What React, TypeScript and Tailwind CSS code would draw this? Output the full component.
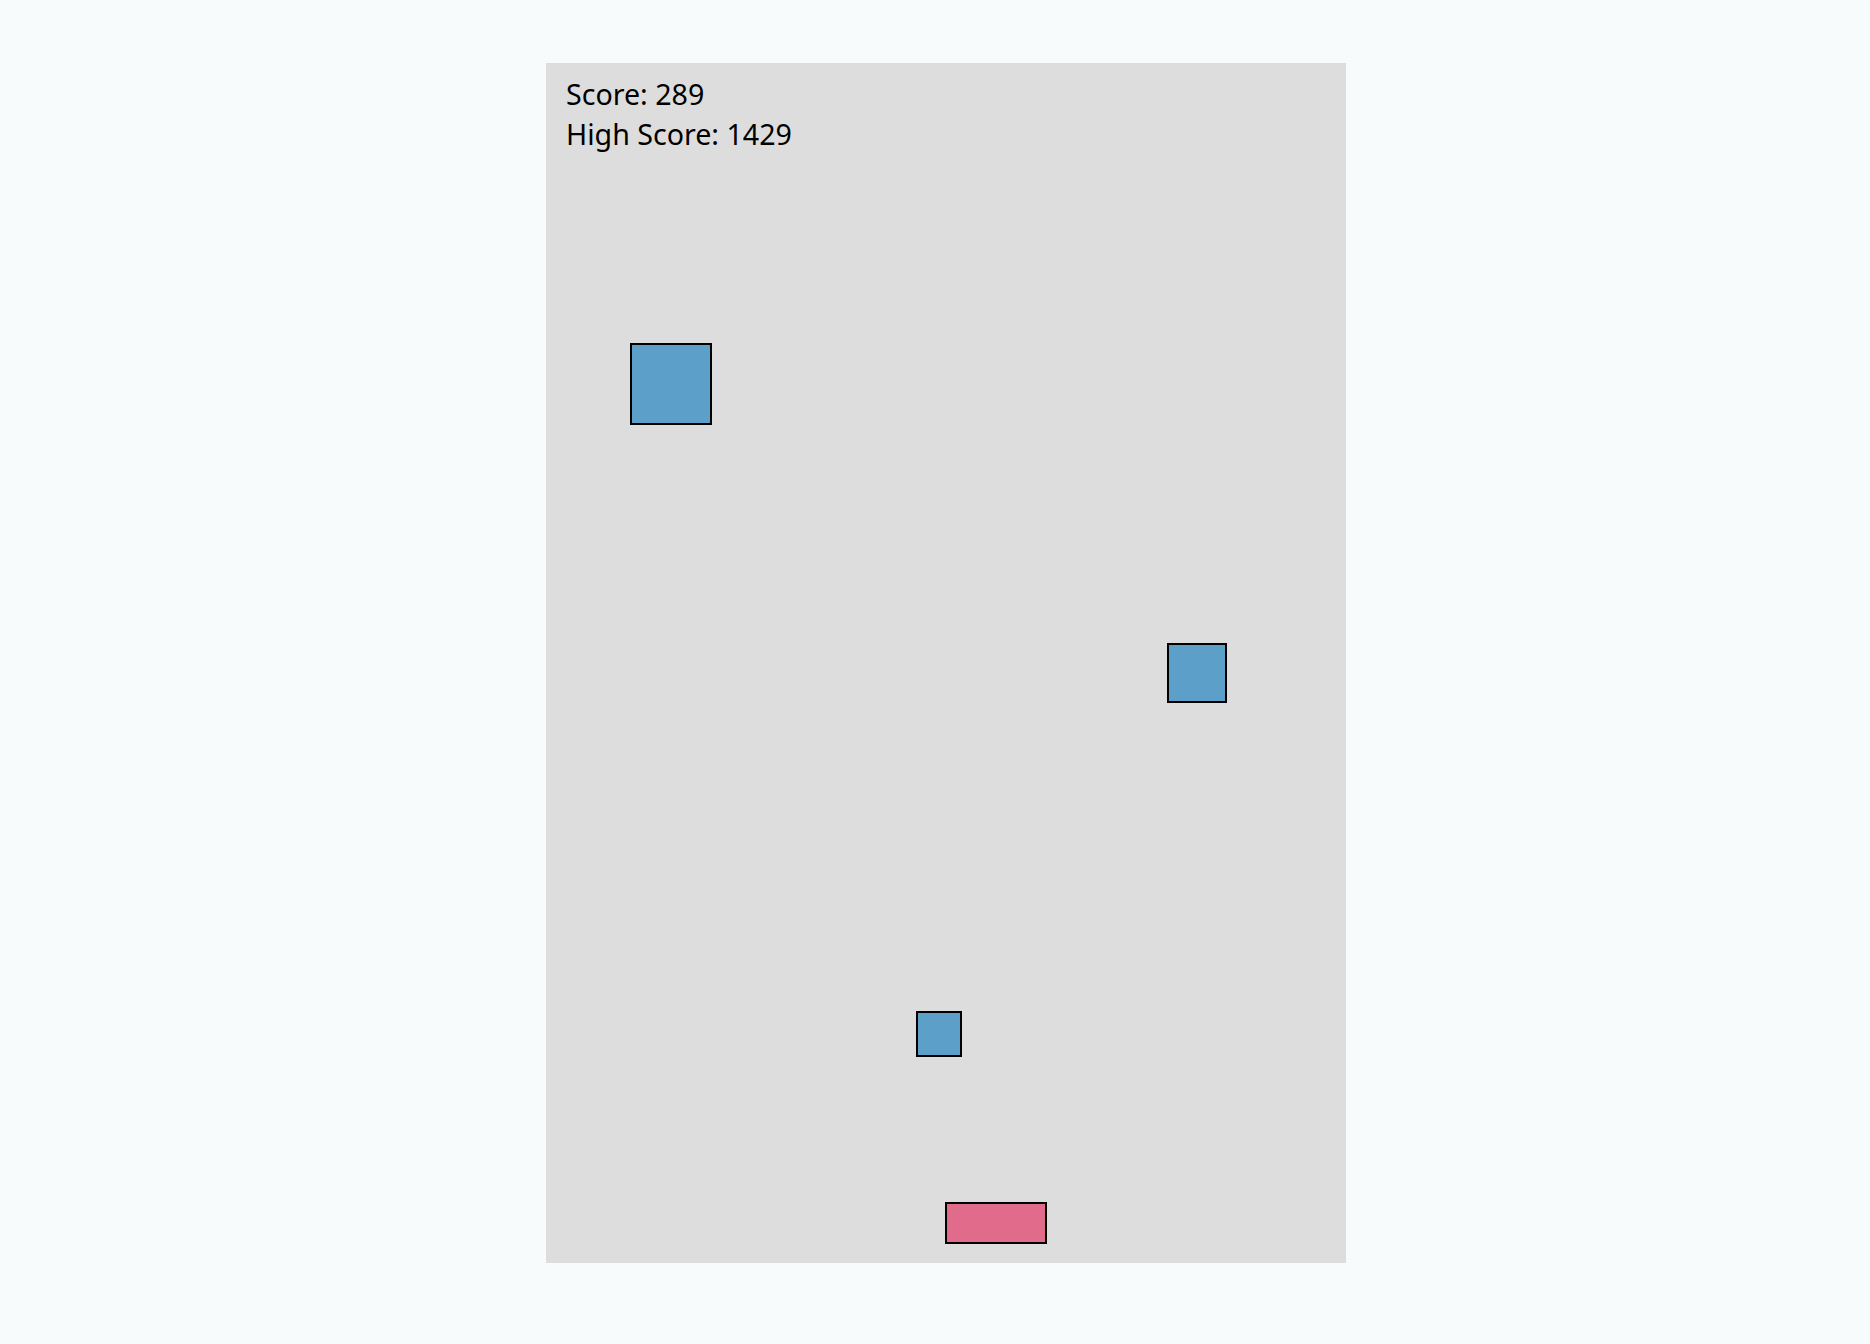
const blocks = [
  { left: 84, top: 280, size: 82 },
  { left: 621, top: 580, size: 60 },
  { left: 370, top: 948, size: 46 },
];

export default function App() {
  return (
    <div className="min-h-screen w-full bg-[#f7fbfc] pt-[63px] pl-[546px]">
      <div className="relative w-[800px] h-[1200px] bg-[#dddddd] overflow-hidden">
        <div className="absolute left-[20px] top-[11px] text-[28.6px] leading-[40px] text-black font-['Noto_Sans','Open_Sans',sans-serif]">
          <div>Score: 289</div>
          <div>High Score: 1429</div>
        </div>
        {blocks.map((b, i) => (
          <div
            key={i}
            className="absolute border-2 border-black bg-[#5ca0c9]"
            style={{ left: b.left, top: b.top, width: b.size, height: b.size }}
          />
        ))}
        <div className="absolute left-[399px] top-[1139px] w-[102px] h-[42px] border-2 border-black bg-[#e06b8b]" />
      </div>
    </div>
  );
}
